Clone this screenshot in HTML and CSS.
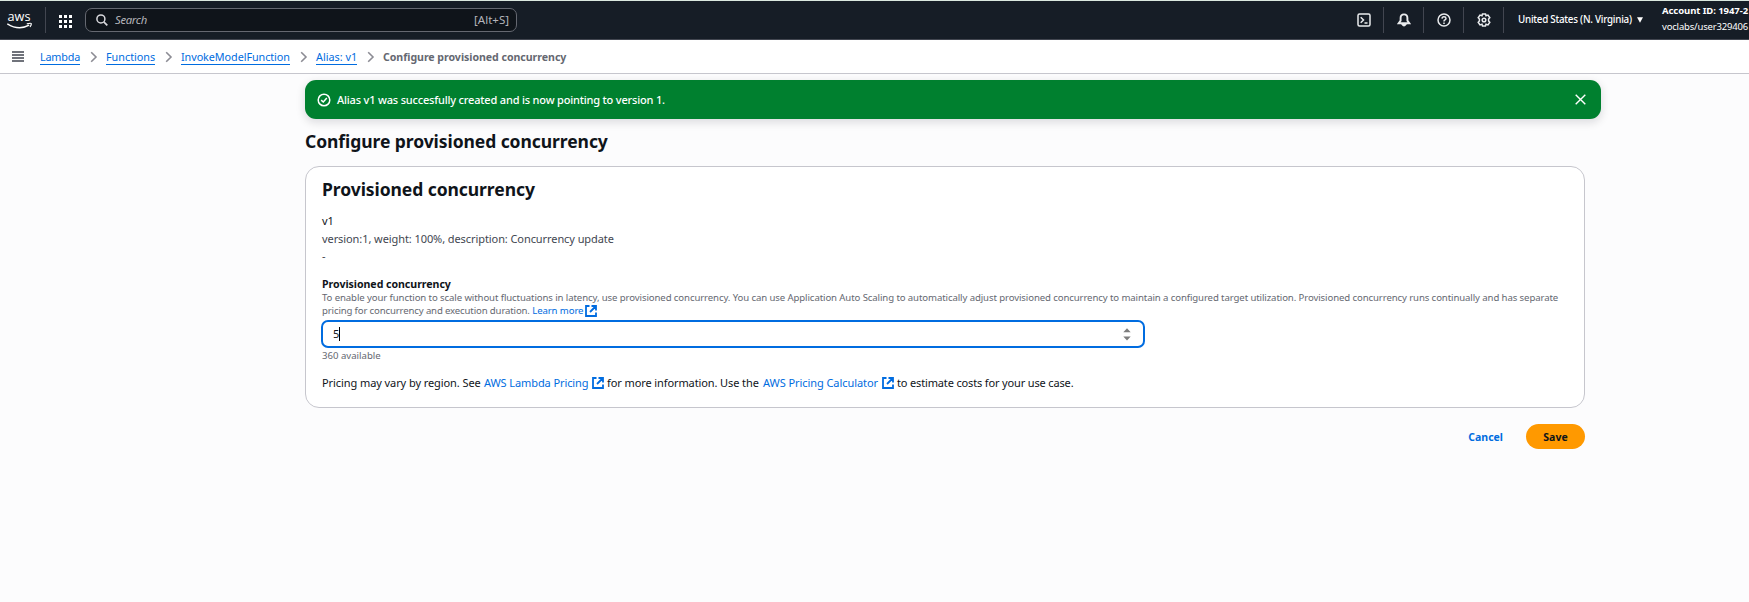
FILE: index.html
```html
<!DOCTYPE html>
<html lang="en">
<head>
<meta charset="utf-8">
<title>Configure provisioned concurrency</title>
<link rel="stylesheet" href="styles.css">
</head>
<body>
<svg width="0" height="0" class="defs">
  <symbol id="ext" viewBox="0 0 12 12"><path d="M4.5 1H1v10h10V7.5M6.5 1H11v4.5M11 1L5 7" fill="none" stroke="currentColor" stroke-width="1.8"/></symbol>
  <symbol id="chev" viewBox="0 0 8 12"><path d="M1.2 1.2L6 6L1.2 10.8" fill="none" stroke="#8c8c94" stroke-width="1.6"/></symbol>
</svg>
<header class="topnav">
  <a class="logo"><svg width="26" height="29" viewBox="0 -6 26 29"><text x="0.5" y="8.2" textLength="23" lengthAdjust="spacingAndGlyphs" class="logo-text">aws</text><path d="M0.3 10.8Q11.5 18 22.2 12.2" fill="none" stroke="#fff" stroke-width="1.5"/><path d="M19.8 10.8Q24 9.8 24.3 10.6Q24.5 12 23 14" fill="none" stroke="#fff" stroke-width="1.2"/></svg></a>
  <span class="divider"></span>
  <button class="apps"><svg width="13" height="13" viewBox="0 0 13 13" fill="#fff"><path d="M0 0h3v3H0zM5 0h3v3H5zM10 0h3v3h-3zM0 5h3v3H0zM5 5h3v3H5zM10 5h3v3h-3zM0 10h3v3H0zM5 10h3v3H5zM10 10h3v3h-3z"/></svg></button>
  <div class="search"><svg width="12" height="12" viewBox="0 0 12 12"><circle cx="4.9" cy="4.9" r="4" fill="none" stroke="#d8d8dc" stroke-width="1.5"/><path d="M7.8 7.8L11.3 11.3" stroke="#d8d8dc" stroke-width="1.7"/></svg><span class="placeholder">Search</span><span class="shortcut">[Alt+S]</span></div>
  <nav class="tools">
    <span class="tool"><svg width="14" height="14" viewBox="0 0 14 14"><rect x="1" y="1" width="12" height="12" rx="1.5"/><path d="M3.7 4.2L6.5 7L3.7 9.8M7.5 10h3"/></svg></span>
    <span class="tool"><svg width="14" height="14" viewBox="0 0 14 14"><path d="M1.7 10.2H12.3L10.4 7.6V5Q10.4 1.4 7 1.4T3.6 5V7.6Z" stroke-width="1.9"/><path d="M5.2 11.3Q7 14 8.8 11.3Z" fill="#e9ebed"/></svg></span>
    <span class="tool"><svg width="14" height="14" viewBox="0 0 14 14"><circle cx="7" cy="7" r="6"/><path d="M5 5.6Q5.1 3.8 7 3.8T9 5.5Q9 6.6 7.8 7Q7 7.3 7 8.5M7 9.4V11"/></svg></span>
    <span class="tool last"><svg width="14" height="14" viewBox="0 0 14 14"><path d="M5.5 1H8.5L9 2.7L11 2.1L12.8 4.7L11.6 6V8L12.8 9.3L11 11.9L9 11.3L8.5 13H5.5L5 11.3L3 11.9L1.2 9.3L2.4 8V6L1.2 4.7L3 2.1L5 2.7Z"/><circle cx="7" cy="7" r="1.8"/></svg></span>
  </nav>
  <div class="region"><span>United States (N. Virginia)</span><svg width="6" height="6" viewBox="0 0 6 6"><path d="M0 0.3H6L3 5.8Z" fill="#fff"/></svg></div>
  <div class="account"><b>Account ID: 1947-2</b><span>voclabs/user329406</span></div>
</header>
<nav class="crumbs">
  <svg class="burger" width="12" height="11" viewBox="0 0 12 11"><path d="M0 1h12M0 4h12M0 7h12M0 10h12" stroke="#424650" stroke-width="1.4"/></svg>
  <a class="c1">Lambda</a><svg class="sep" width="8" height="12"><use href="#chev"/></svg>
  <a class="c2">Functions</a><svg class="sep" width="8" height="12"><use href="#chev"/></svg>
  <a class="c3">InvokeModelFunction</a><svg class="sep" width="8" height="12"><use href="#chev"/></svg>
  <a class="c4">Alias: v1</a><svg class="sep" width="8" height="12"><use href="#chev"/></svg>
  <b>Configure provisioned concurrency</b>
</nav>
<main class="content">
  <div class="flash"><svg width="14" height="14" viewBox="0 0 14 14" fill="none" stroke="#fff" stroke-width="1.5"><circle cx="7" cy="7" r="5.8"/><path d="M4.2 7.1L6.3 9L9.8 5.1"/></svg><span>Alias v1 was succesfully created and is now pointing to version 1.</span><svg class="close" width="11" height="11" viewBox="0 0 11 11"><path d="M0.7 0.7L10.3 10.3M10.3 0.7L0.7 10.3" stroke="#fff" stroke-width="1.4"/></svg></div>
  <h1>Configure provisioned concurrency</h1>
  <section class="card">
    <h2>Provisioned concurrency</h2>
    <p class="alias">v1</p>
    <p class="detail">version:1, weight: 100%, description: Concurrency update</p>
    <p class="detail dash">-</p>
    <label for="pc">Provisioned concurrency</label>
    <p class="hint">To enable your function to scale without fluctuations in latency, use provisioned concurrency. You can use Application Auto Scaling to automatically adjust provisioned concurrency to maintain a configured target utilization. Provisioned concurrency runs continually and has separate<br><span class="hint2">pricing for concurrency and execution duration.</span> <a class="learn">Learn more <svg width="12" height="12"><use href="#ext"/></svg></a></p>
    <div class="field" id="pc"><span class="value">5</span><span class="caret"></span><svg class="spin" width="8" height="13" viewBox="0 0 8 13"><path d="M0.3 4.2L4 0.3L7.7 4.2ZM0.3 8.6L4 12.5L7.7 8.6Z" fill="#7d7d7d"/></svg></div>
    <p class="avail">360 available</p>
    <p class="pricing"><span>Pricing may vary by region. See</span><a class="p1">AWS Lambda Pricing</a><svg width="12" height="12"><use href="#ext"/></svg><span class="p2">for more information. Use the</span><a class="p3">AWS Pricing Calculator</a><svg width="12" height="12"><use href="#ext"/></svg><span class="p4">to estimate costs for your use case.</span></p>
  </section>
  <div class="actions"><button class="cancel">Cancel</button><button class="save">Save</button></div>
</main>
</body>
</html>
```
FILE: styles.css
```css
*{box-sizing:border-box}
body{margin:0;height:602px;overflow:hidden;background:#fcfcfd;font:11px/16px "Noto Sans",sans-serif;color:#0f141a;white-space:nowrap}
h1,h2,p{margin:0}
svg{display:block;flex:none}
.defs{position:absolute}
button{border:0;background:none;padding:0;font-family:inherit}
a{color:#006ce0}
.topnav{height:40px;background:#161d26;border-top:1px solid #dbe8df;border-bottom:1px solid #424650;display:flex;align-items:center;color:#fff;overflow:hidden}
.logo{margin-left:7px;width:38px;padding-top:2px}
.logo-text{font:500 12.5px "Open Sans",sans-serif;fill:#fff}
.divider{width:1px;height:26px;background:#424650}
.apps{margin:2px 0 0 13px}
.search{margin-left:13px;width:432px;height:24px;border:1px solid #656871;border-radius:7px;background:#0f141a;display:flex;align-items:center;padding:0 7px 0 10px;color:#b4b4bb}
.placeholder{font-style:italic;font-size:11.3px;letter-spacing:-.3px;margin-left:7px}
.shortcut{margin-left:auto;font-size:11.5px}
.tools{margin-left:827px;display:flex;height:26px}
.tools svg{fill:none;stroke:#e9ebed;stroke-width:1.5}
.tool{width:40px;height:26px;border-right:1px solid #424650;display:flex;align-items:center;justify-content:center}
.tool.last{padding-left:1px}
.region{margin-left:14px;width:144px;display:flex;align-items:center;font-size:9.8px;letter-spacing:-.24px;font-weight:500}
.region svg{margin-left:5px}
.account{display:flex;flex-direction:column;font-size:9.5px;line-height:16px;margin-top:-2px;letter-spacing:-.17px}
.account b{letter-spacing:-.07px}
.crumbs{height:34px;background:#fff;border-bottom:1px solid #c6c6cd;display:flex;align-items:center;font-size:10.8px}
.burger{margin:0 16px 0 12px}
.crumbs a{border-bottom:1px solid #006ce0;height:15px;line-height:14px;margin-top:1px}
.sep{margin:0 8px 0 10px}
.c1{width:40px;letter-spacing:-.18px}
.c2{width:49px}
.c3{width:109px;letter-spacing:-.06px}
.c4{width:41px}
.crumbs b{color:#656871;font-size:10.6px;letter-spacing:-.04px}
.content{padding:6px 0 0 305px;display:flex;flex-direction:column;align-items:flex-start}
.flash{width:1296px;height:39px;background:#00802f;border-radius:11px;box-shadow:0 3px 9px 1px rgba(0,7,22,.12);display:flex;align-items:center;padding:0 15px 0 12px;color:#fff;font-weight:500;letter-spacing:-.18px}
.flash span{margin-left:6px}
.close{margin-left:auto}
h1{font-size:17.5px;line-height:24px;letter-spacing:-.07px;margin-top:10px}
.card{width:1280px;height:242px;margin-top:13px;background:#fff;border:1px solid #c6c6cd;border-radius:14px;padding:10px 16px 0}
h2{font-size:17.5px;line-height:24px;letter-spacing:-.07px}
.alias{margin-top:11px;line-height:18px}
.detail{color:#424650;line-height:18px;letter-spacing:-.08px}
.dash{line-height:16px}
label{display:block;font-weight:700;font-size:10.6px;line-height:14px;letter-spacing:-.04px;margin-top:13px}
.hint{font-size:9.6px;line-height:13px;letter-spacing:-.1px;color:#656871}
.hint2{letter-spacing:-.14px}
.learn svg{display:inline-block;vertical-align:-3px;margin-left:-1px}
.field{width:824px;height:28px;margin:3px 0 0 -1px;border:2px solid #006ce0;border-radius:7px;display:flex;align-items:center;padding:0 12px 0 10px}
.caret{width:1px;height:14px;background:#000}
.spin{margin-left:auto}
.avail{font-size:9.6px;line-height:14px;color:#656871;margin-top:1px}
.pricing{display:flex;align-items:center;margin-top:12px;letter-spacing:-.1px}
.pricing span:first-child{width:158px;letter-spacing:-.08px}
.pricing svg{color:#006ce0}
.p1{width:104px;margin:0 4px}
.p2{width:153px;margin:0 3px}
.p3{width:115px;margin:0 4px 0 0;letter-spacing:-.07px}
.p4{margin-left:3px;letter-spacing:-.15px}
.actions{width:1280px;display:flex;justify-content:flex-end;align-items:center;margin-top:16px;gap:23px}
.actions button{font-size:10.5px;font-weight:700}
.cancel{color:#006ce0}
.save{width:59px;height:25px;border-radius:13px;background:#ff9900;color:#0f141a}
```
